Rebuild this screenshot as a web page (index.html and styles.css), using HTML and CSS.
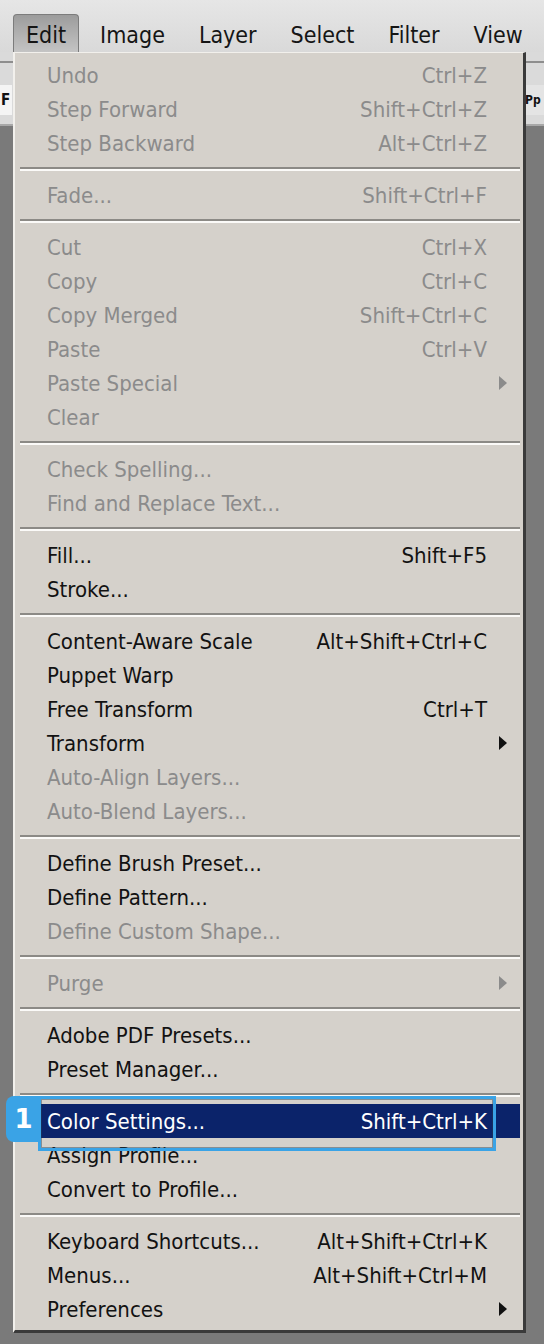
FILE: index.html
```html
<!DOCTYPE html>
<html lang="en">
<head>
    <meta charset="UTF-8">
    <meta name="viewport" content="width=device-width, initial-scale=1.0">
    <title>Edit Menu</title>
    <link rel="stylesheet" href="styles.css">
</head>
<body>
    <div class="app">
        <div class="menubar">
            <span class="menubar-item active">Edit</span>
            <span class="menubar-item">Image</span>
            <span class="menubar-item">Layer</span>
            <span class="menubar-item">Select</span>
            <span class="menubar-item">Filter</span>
            <span class="menubar-item">View</span>
        </div>

        <div class="toolbar">
            <div class="toolbar-line"></div>
            <div class="toolbar-row">
                <span class="field field-left">F</span>
                <span class="field field-right">Pp</span>
            </div>
        </div>

        <div class="workspace"></div>

        <div class="dropdown">
            <div class="item disabled"><span class="label">Undo</span><span class="key">Ctrl+Z</span></div>
            <div class="item disabled"><span class="label">Step Forward</span><span class="key">Shift+Ctrl+Z</span></div>
            <div class="item disabled"><span class="label">Step Backward</span><span class="key">Alt+Ctrl+Z</span></div>
            <div class="sep"></div>
            <div class="item disabled"><span class="label">Fade...</span><span class="key">Shift+Ctrl+F</span></div>
            <div class="sep"></div>
            <div class="item disabled"><span class="label">Cut</span><span class="key">Ctrl+X</span></div>
            <div class="item disabled"><span class="label">Copy</span><span class="key">Ctrl+C</span></div>
            <div class="item disabled"><span class="label">Copy Merged</span><span class="key">Shift+Ctrl+C</span></div>
            <div class="item disabled"><span class="label">Paste</span><span class="key">Ctrl+V</span></div>
            <div class="item disabled"><span class="label">Paste Special</span><span class="key"></span><span class="arrow"></span></div>
            <div class="item disabled"><span class="label">Clear</span></div>
            <div class="sep"></div>
            <div class="item disabled"><span class="label">Check Spelling...</span></div>
            <div class="item disabled"><span class="label">Find and Replace Text...</span></div>
            <div class="sep"></div>
            <div class="item"><span class="label">Fill...</span><span class="key">Shift+F5</span></div>
            <div class="item"><span class="label">Stroke...</span></div>
            <div class="sep"></div>
            <div class="item"><span class="label">Content-Aware Scale</span><span class="key">Alt+Shift+Ctrl+C</span></div>
            <div class="item"><span class="label">Puppet Warp</span></div>
            <div class="item"><span class="label">Free Transform</span><span class="key">Ctrl+T</span></div>
            <div class="item"><span class="label">Transform</span><span class="key"></span><span class="arrow"></span></div>
            <div class="item disabled"><span class="label">Auto-Align Layers...</span></div>
            <div class="item disabled"><span class="label">Auto-Blend Layers...</span></div>
            <div class="sep"></div>
            <div class="item"><span class="label">Define Brush Preset...</span></div>
            <div class="item"><span class="label">Define Pattern...</span></div>
            <div class="item disabled"><span class="label">Define Custom Shape...</span></div>
            <div class="sep"></div>
            <div class="item disabled"><span class="label">Purge</span><span class="key"></span><span class="arrow"></span></div>
            <div class="sep"></div>
            <div class="item"><span class="label">Adobe PDF Presets...</span></div>
            <div class="item"><span class="label">Preset Manager...</span></div>
            <div class="sep"></div>
            <div class="item selected"><span class="label">Color Settings...</span><span class="key">Shift+Ctrl+K</span></div>
            <div class="item"><span class="label">Assign Profile...</span></div>
            <div class="item"><span class="label">Convert to Profile...</span></div>
            <div class="sep"></div>
            <div class="item"><span class="label">Keyboard Shortcuts...</span><span class="key">Alt+Shift+Ctrl+K</span></div>
            <div class="item"><span class="label">Menus...</span><span class="key">Alt+Shift+Ctrl+M</span></div>
            <div class="item"><span class="label">Preferences</span><span class="key"></span><span class="arrow"></span></div>
        </div>

        <div class="callout"></div>
        <div class="badge">1</div>
    </div>
</body>
</html>
```

FILE: styles.css
```css
* {
    box-sizing: border-box;
    margin: 0;
    padding: 0;
}

body {
    background-color: #7a7a7a;
    font-family: "DejaVu Sans Condensed", "DejaVu Sans", sans-serif;
    width: 544px;
    height: 1344px;
    overflow: hidden;
}

.app {
    position: relative;
    width: 544px;
    height: 1344px;
}

/* top menu bar */
.menubar {
    height: 52px;
    background: linear-gradient(#e6e6e6, #d9d9d9);
    display: flex;
    align-items: flex-end;
    padding-left: 13px;
}

.menubar-item {
    font-size: 23px;
    color: #151515;
    height: 38px;
    line-height: 36px;
    padding: 3px 13px 0 13px;
    margin-right: 8px;
}

.menubar-item.active {
    background: linear-gradient(#9c9c9c, #c4c4c4);
    border: 1px solid #7c7c7c;
    border-bottom: none;
    border-radius: 4px 4px 0 0;
    padding: 2px 12px 0 12px;
}

/* options bar under the menu */
.toolbar {
    height: 74px;
    background-color: #dadada;
    border-bottom: 2px solid #a8a8a8;
}

.toolbar-line {
    height: 11px;
    border-bottom: 2px solid #8e8e8e;
}

.toolbar-row {
    display: flex;
    justify-content: space-between;
    margin-top: 22px;
}

.field {
    font-size: 15px;
    font-weight: bold;
    color: #111;
    background-color: #f4f4f4;
    height: 30px;
    line-height: 30px;
}

.field-left {
    width: 12px;
    padding-left: 1px;
}

.field-right {
    width: 20px;
    padding-left: 1px;
    background-color: #e4e4e4;
    font-size: 12px;
}

.workspace {
    height: 1218px;
}

/* dropdown */
.dropdown {
    position: absolute;
    top: 52px;
    left: 13px;
    width: 513px;
    padding: 5px 0 4px 0;
    background-color: #d5d1cb;
    border-top: 1px solid #f2f0ec;
    border-left: 2px solid #f2f0ec;
    border-right: 3px solid #3a3a3a;
    border-bottom: 3px solid #3a3a3a;
}

.item {
    display: grid;
    grid-template-columns: 1fr auto 36px;
    align-items: center;
    height: 34px;
    padding-left: 32px;
    font-size: 22px;
    color: #121212;
    white-space: nowrap;
}

.item.disabled {
    color: #8b8b8b;
}

.item.selected {
    background-color: #0b236a;
    color: #ffffff;
    margin: 0 3px 0 5px;
    padding-left: 27px;
    grid-template-columns: 1fr auto 33px;
}

.arrow {
    width: 0;
    height: 0;
    margin-left: 12px;
    border-top: 7px solid transparent;
    border-bottom: 7px solid transparent;
    border-left: 8px solid #111;
}

.disabled .arrow {
    border-left-color: #8b8b8b;
}

.sep {
    height: 18px;
    margin: 0 3px 0 5px;
    display: flex;
    flex-direction: column;
    justify-content: center;
}

.sep::before {
    content: "";
    display: block;
    height: 2px;
    background-color: #8c8a86;
}

.sep::after {
    content: "";
    display: block;
    height: 2px;
    background-color: #fbfaf8;
}

/* tutorial callout */
.callout {
    position: absolute;
    left: 38px;
    top: 1096px;
    width: 458px;
    height: 55px;
    border: 3px solid #3aa3e6;
    box-shadow: inset 0 0 0 1px rgba(40, 60, 80, 0.45);
}

.badge {
    position: absolute;
    left: 6px;
    top: 1096px;
    width: 35px;
    height: 46px;
    background-color: #3aa3e6;
    border-radius: 8px 0 0 8px;
    color: #ffffff;
    font-family: "DejaVu Sans", sans-serif;
    font-weight: bold;
    font-size: 26px;
    line-height: 46px;
    text-align: center;
}
```
